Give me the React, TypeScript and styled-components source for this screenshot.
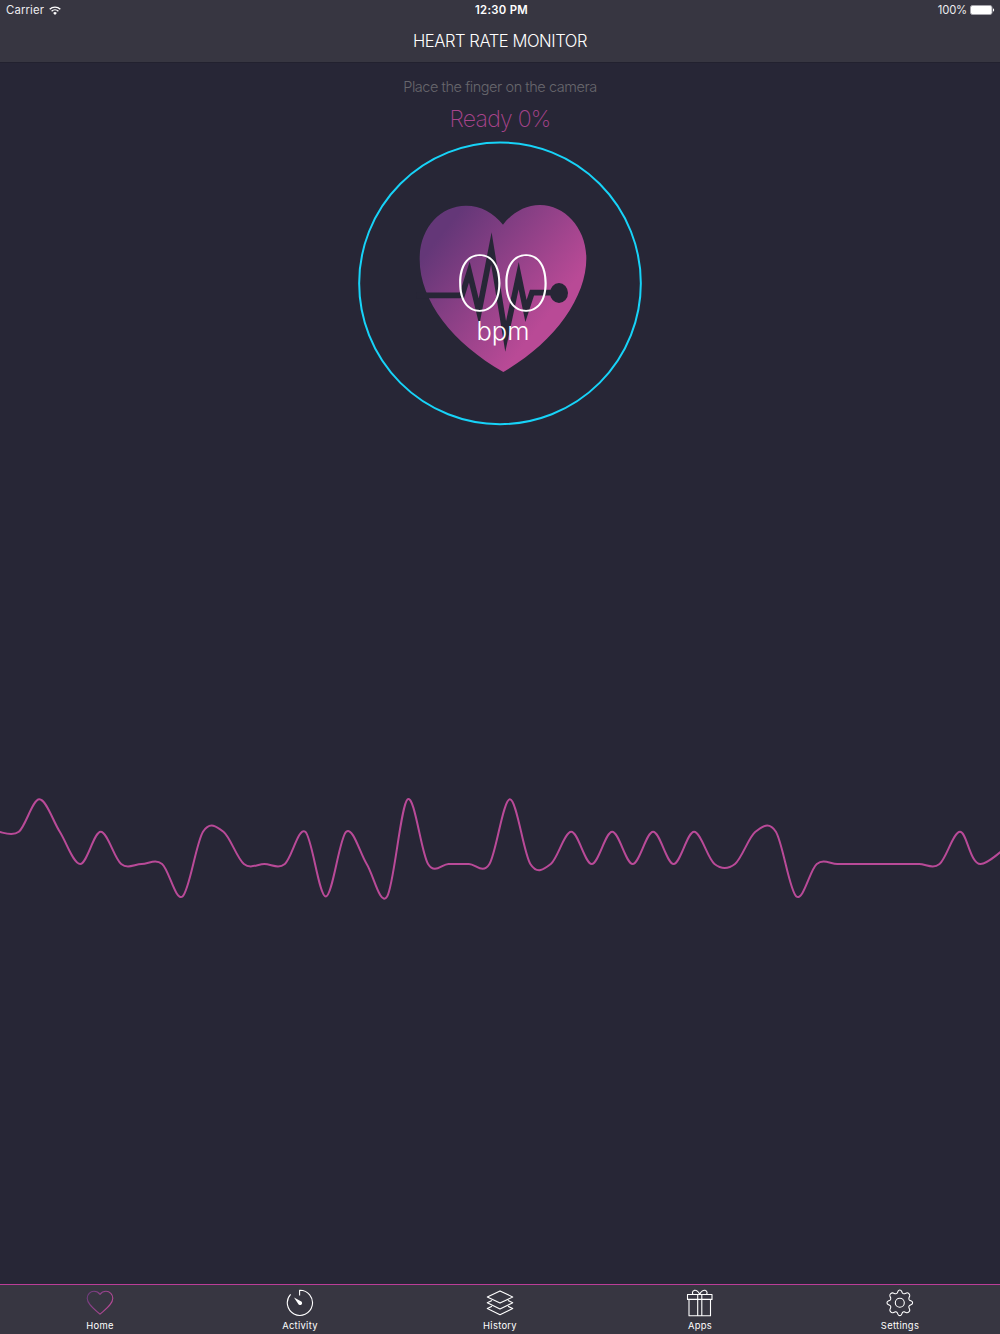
import React from "react";
import styled, { createGlobalStyle } from "styled-components";

type Point = [number, number];

const LEVELS = [896.5, 864, 831.8, 799.3];
const STEP = 20.46;
const SAMPLES = [
  2, 2, 3, 2, 1, 2, 1, 1, 1, 0, 2, 2, 1, 1, 1, 2, 0, 2, 1, 0, 3, 1, 1, 1, 1, 3,
  1, 1, 2, 1, 2, 1, 2, 1, 2, 1, 1, 2, 2, 0, 1, 1, 1, 1, 1, 1, 1, 2, 1,
];

const wavePoints: Point[] = SAMPLES.map((level, i) => [
  i * STEP - 1.6,
  LEVELS[level] - 780,
]);
wavePoints.push([1023, LEVELS[2] - 780]);

// catmull-rom spline converted to cubic segments
const toPath = (points: Point[]) => {
  let d = `M${points[0][0]} ${points[0][1]}`;
  for (let i = 0; i < points.length - 1; i++) {
    const p0 = points[i - 1] || points[i];
    const p1 = points[i];
    const p2 = points[i + 1];
    const p3 = points[i + 2] || p2;
    d += `C${p1[0] + (p2[0] - p0[0]) / 6} ${p1[1] + (p2[1] - p0[1]) / 6} ${
      p2[0] - (p3[0] - p1[0]) / 6
    } ${p2[1] - (p3[1] - p1[1]) / 6} ${p2[0]} ${p2[1]}`;
  }
  return d;
};

const tabs = [
  {
    name: "Home",
    icon: (
      <>
        <defs>
          <linearGradient id="tabHeart" x1="0" y1="0" x2="1" y2="0.5">
            <stop offset="0" stopColor="#6b3a7c" />
            <stop offset="1" stopColor="#b94a97" />
          </linearGradient>
        </defs>
        <path
          stroke="url(#tabHeart)"
          d="M14 5.4C12.7 3.6 10.5 2.3 8 2.3C4.2 2.3 1.2 5.3 1.2 9.2C1.2 15.2 8.5 20.2 14 25.2C19.5 20.2 26.8 15.2 26.8 9.2C26.8 5.3 23.8 2.3 20 2.3C17.5 2.3 15.3 3.6 14 5.4Z"
        />
      </>
    ),
  },
  {
    name: "Activity",
    icon: (
      <>
        <path d="M13.6 6.5V1.2A12.6 12.6 0 1 1 4.6 5.3" />
        <path
          d="M8 8.4L14.9 12.2A2 2 0 1 1 12.3 14.9Z"
          fill="#fff"
          stroke="none"
        />
      </>
    ),
  },
  {
    name: "History",
    icon: (
      <>
        <path d="M14 1.9L26.7 8L14 14.1L1.3 8Z" />
        <path d="M6 11.5L1.3 13.8L14 19.9L26.7 13.8L22 11.5" />
        <path d="M6 17.3L1.3 19.6L14 25.7L26.7 19.6L22 17.3" />
      </>
    ),
  },
  {
    name: "Apps",
    icon: (
      <>
        <path d="M1.5 5.5H26V10.4H1.5ZM3 10.4V26.7H24.5V10.4M11.7 5.5V26.7M15.8 5.5V26.7" />
        <path d="M13.7 5.5C12.7 2.6 10.2 0.8 8.2 1.4C6.2 2.1 6 4.3 7.1 5.5M13.7 5.5C14.7 2.6 17.3 0.8 19.3 1.4C21.3 2.1 21.5 4.3 20.4 5.5" />
      </>
    ),
  },
  {
    name: "Settings",
    icon: (
      <>
        <circle cx="13.8" cy="13.8" r="4.5" />
        <path
          transform="translate(-0.2 -0.2)"
          d="M12.2 2.4Q12.7 1.2 14 1.2T15.8 2.4L16.6 4.2Q17.4 5.3 18.8 4.9L20.8 4.1Q22 3.7 23.1 4.9T23.9 7.2L23.1 9.2Q22.7 10.6 23.8 11.4L25.6 12.2Q26.8 12.7 26.8 14T25.6 15.8L23.8 16.6Q22.7 17.4 23.1 18.8L23.9 20.8Q24.3 22 23.1 23.1T20.8 23.9L18.8 23.1Q17.4 22.7 16.6 23.8L15.8 25.6Q15.3 26.8 14 26.8T12.2 25.6L11.4 23.8Q10.6 22.7 9.2 23.1L7.2 23.9Q6 24.3 4.9 23.1T4.1 20.8L4.9 18.8Q5.3 17.4 4.2 16.6L2.4 15.8Q1.2 15.3 1.2 14T2.4 12.2L4.2 11.4Q5.3 10.6 4.9 9.2L4.1 7.2Q3.7 6 4.9 4.9T7.2 4.1L9.2 4.9Q10.6 5.3 11.4 4.2Z"
        />
      </>
    ),
  },
];

function App() {
  return (
    <Screen>
      <GlobalStyle />
      <Header>
        <StatusBar>
          <Carrier>
            Carrier
            <WifiIcon viewBox="0 0 12 9">
              <path d="M0.7 3.3A7.6 7.6 0 0 1 11.3 3.3" />
              <path d="M2.6 5.2A4.9 4.9 0 0 1 9.4 5.2" />
              <path d="M6 8.9L4.1 6.9A2.7 2.7 0 0 1 7.9 6.9Z" fill="#fff" stroke="none" />
            </WifiIcon>
          </Carrier>
          <Clock>12:30 PM</Clock>
          <Power>
            100%
            <BatteryIcon viewBox="0 0 25 10">
              <rect x="0.5" y="0.5" width="21.5" height="9" rx="2" fill="#fff" stroke="#a5a4ab" />
              <path d="M23 3.3C24.6 3.7 24.6 6.3 23 6.7Z" fill="#fff" />
            </BatteryIcon>
          </Power>
        </StatusBar>
        <Title>HEART RATE MONITOR</Title>
      </Header>

      <Content>
        <Hint>Place the finger on the camera</Hint>
        <Ready>Ready 0%</Ready>
        <Gauge>
          <svg width="300" height="300" viewBox="0 0 900 900" fill="none">
            <defs>
              <linearGradient id="heart" x1="0.15" y1="0.15" x2="0.78" y2="0.65">
                <stop offset="0" stopColor="#643778" />
                <stop offset="1" stopColor="#b94a96" />
              </linearGradient>
            </defs>
            <circle cx="450" cy="445" r="422.5" stroke="#17d3f8" strokeWidth="6" />
            <path
              fill="url(#heart)"
              d="M459 269C430 233 392 212 348 212C270 212 209 280 209 372C209 500 310 625 460 711C610 625 709 490 709 370C709 280 645 210 570 210C525 210 485 235 459 269Z"
            />
            <path
              stroke="#272636"
              strokeWidth="17"
              strokeMiterlimit="20"
              d="M200 481H336L358 411L387 530L424 340L467 604L506 422L528 528L546 473H627"
            />
            <ellipse cx="627" cy="474" rx="27" ry="30" fill="#272636" />
          </svg>
          <Reading>
            <Rate>00</Rate>
            <Unit>bpm</Unit>
          </Reading>
        </Gauge>
      </Content>

      <Wave viewBox="0 0 1000 140">
        <path d={toPath(wavePoints)} />
      </Wave>

      <TabBar>
        {tabs.map(({ name, icon }) => (
          <Tab key={name}>
            <TabIcon viewBox="0 0 28 28">{icon}</TabIcon>
            <TabLabel>{name}</TabLabel>
          </Tab>
        ))}
      </TabBar>
    </Screen>
  );
}
export default App;

const GlobalStyle = createGlobalStyle`
  * {
    box-sizing: border-box;
  }
  body {
    margin: 0;
    background: #272636;
  }
`;

const Screen = styled.div`
  display: flex;
  flex-direction: column;
  width: 1000px;
  height: 1334px;
  overflow: hidden;
  background: #272636;
  color: #fff;
  font-family: Inter, "Liberation Sans", sans-serif;
`;

const Header = styled.header`
  height: 63px;
  background: #373641;
  border-bottom: 1px solid #22212f;
`;
const StatusBar = styled.div`
  display: grid;
  grid-template-columns: 1fr auto 1fr;
  height: 20px;
  padding: 0 5px 0 6px;
  line-height: 21px;
  font-size: 11.3px;
`;
const Carrier = styled.div`
  display: flex;
  align-items: center;
  gap: 5px;
  color: #ececee;
  letter-spacing: 0.15px;
`;
const WifiIcon = styled.svg`
  width: 12px;
  height: 9px;
  fill: none;
  stroke: #fff;
  stroke-width: 1.4;
`;
const Clock = styled.div`
  padding-left: 2px;
  font-weight: 600;
  letter-spacing: 0.3px;
`;
const Power = styled.div`
  display: flex;
  align-items: center;
  justify-content: flex-end;
  gap: 3px;
  color: #ececee;
  letter-spacing: -0.2px;
`;
const BatteryIcon = styled.svg`
  width: 25px;
  height: 10px;
  margin-bottom: 1px;
`;
const Title = styled.h1`
  margin: 0;
  line-height: 43px;
  text-align: center;
  font-size: 16.6px;
  font-weight: 300;
  letter-spacing: -0.45px;
`;

const Content = styled.main`
  display: flex;
  flex-direction: column;
  align-items: center;
  height: 717px;
`;
const Hint = styled.p`
  margin: 14px 0 0;
  line-height: 20px;
  color: #67666d;
  font-size: 14.5px;
  font-weight: 300;
  letter-spacing: -0.44px;
`;
const Ready = styled.p`
  margin: 7px 0 1px;
  line-height: 30px;
  color: #a8448c;
  font-size: 23px;
  font-weight: 200;
  letter-spacing: -0.75px;
`;
const Gauge = styled.div`
  position: relative;
  width: 300px;
  height: 300px;
`;
const Reading = styled.div`
  position: absolute;
  top: 119px;
  left: 3px;
  width: 300px;
  text-align: center;
`;
const Rate = styled.div`
  line-height: 58px;
  font-size: 77px;
  font-weight: 100;
  letter-spacing: -7px;
  text-indent: -7px;
  transform: scaleX(1.2);
`;
const Unit = styled.div`
  line-height: 30px;
  margin-top: 4px;
  font-size: 25.5px;
  font-weight: 300;
`;

const Wave = styled.svg`
  flex: none;
  width: 1000px;
  height: 140px;
  fill: none;
  stroke: #b94a98;
  stroke-width: 2;
`;

const TabBar = styled.nav`
  display: grid;
  grid-template-columns: repeat(5, 1fr);
  height: 50px;
  margin-top: auto;
  background: #373641;
  border-top: 1px solid #bb3d98;
`;
const Tab = styled.div`
  display: flex;
  flex-direction: column;
  align-items: center;
  padding-top: 4px;
`;
const TabIcon = styled.svg`
  width: 28px;
  height: 28px;
  fill: none;
  stroke: #fff;
  stroke-width: 1.1;
  stroke-linejoin: round;
`;
const TabLabel = styled.span`
  margin-top: 2px;
  line-height: 13px;
  font-size: 9.4px;
  letter-spacing: 0.3px;
`;
